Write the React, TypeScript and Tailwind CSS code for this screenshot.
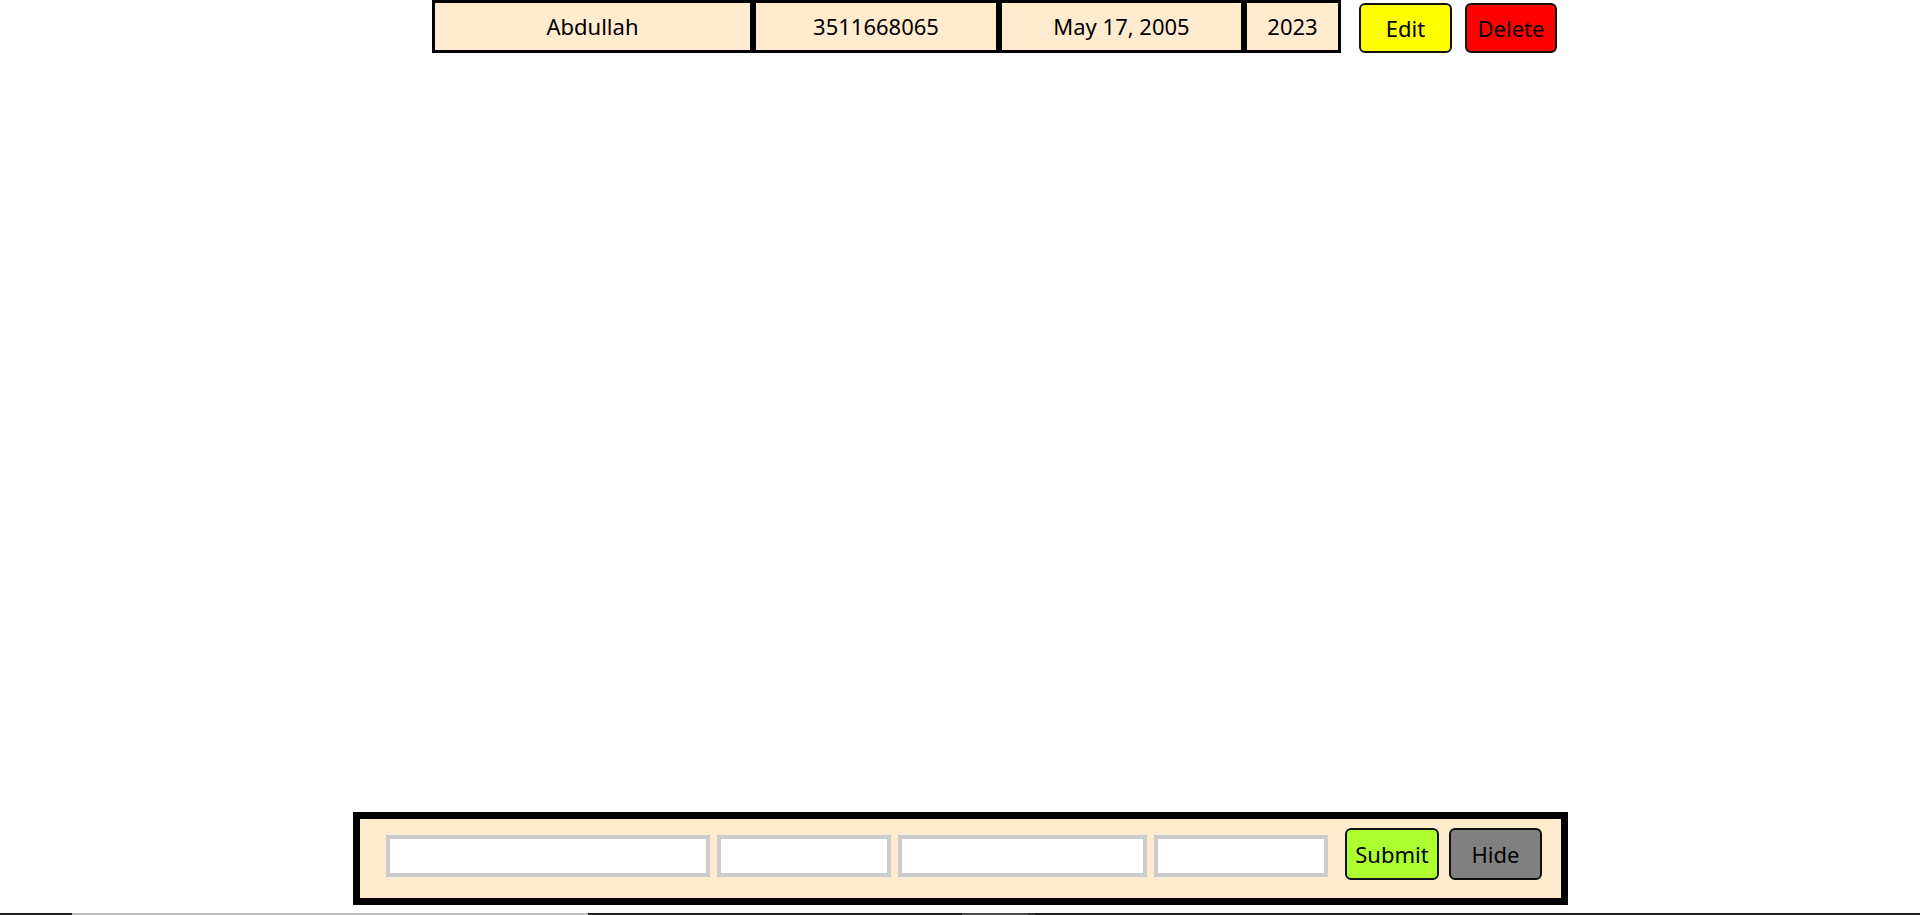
import React from "react";

const font = { fontFamily: '"Noto Sans", "Open Sans", sans-serif' };

export default function App() {
  return (
    <div
      className="h-[915px] w-full flex flex-col bg-white text-black text-[22px] overflow-hidden"
      style={font}
    >
      {/* Top record row */}
      <div className="flex items-start pl-[432px]">
        <div className="flex">
          <div className="w-[321px] h-[53px] border-[3px] border-black bg-[#ffebcd] flex items-center justify-center">
            Abdullah
          </div>
          <div className="w-[246px] h-[53px] border-[3px] border-black bg-[#ffebcd] flex items-center justify-center">
            3511668065
          </div>
          <div className="w-[245px] h-[53px] border-[3px] border-black bg-[#ffebcd] flex items-center justify-center">
            May 17, 2005
          </div>
          <div className="w-[97px] h-[53px] border-[3px] border-black bg-[#ffebcd] flex items-center justify-center">
            2023
          </div>
        </div>
        <button className="ml-[18px] mt-[3px] w-[93px] h-[50px] border-2 border-[#111] rounded-[6px] bg-[#ffff00] flex items-center justify-center">
          Edit
        </button>
        <button className="ml-[13px] mt-[3px] w-[92px] h-[50px] border-2 border-[#111] rounded-[6px] bg-[#ff0000] flex items-center justify-center">
          Delete
        </button>
      </div>

      <div className="flex-1" />

      {/* Bottom form */}
      <div className="flex pl-[353px]">
        <div className="w-[1215px] h-[93px] border-[7px] border-black bg-[#ffebcd] flex items-start pl-[26px]">
          <input className="mt-[16px] w-[324px] h-[42px] border-4 border-[#cccccc] bg-white outline-none" />
          <input className="ml-[7px] mt-[16px] w-[174px] h-[42px] border-4 border-[#cccccc] bg-white outline-none" />
          <input className="ml-[7px] mt-[16px] w-[249px] h-[42px] border-4 border-[#cccccc] bg-white outline-none" />
          <input className="ml-[7px] mt-[16px] w-[174px] h-[42px] border-4 border-[#cccccc] bg-white outline-none" />
          <button className="ml-[17px] mt-[9px] w-[94px] h-[52px] border-2 border-[#111] rounded-[6px] bg-[#adff2f] flex items-center justify-center">
            Submit
          </button>
          <button className="ml-[10px] mt-[9px] w-[93px] h-[52px] border-2 border-[#111] rounded-[6px] bg-[#808080] flex items-center justify-center">
            Hide
          </button>
        </div>
      </div>

      <div className="h-[8px]" />

      {/* Bottom strip */}
      <div className="h-[2px] flex">
        <div className="w-[72px] bg-[#202020]" />
        <div className="w-[516px] bg-[#c0c0c0]" />
        <div className="w-[374px] bg-[#202020]" />
        <div className="w-[66px] bg-[#4a4a4a]" />
        <div className="w-[7px] bg-[#333333]" />
        <div className="flex-1 bg-[#202020]" />
      </div>
    </div>
  );
}
